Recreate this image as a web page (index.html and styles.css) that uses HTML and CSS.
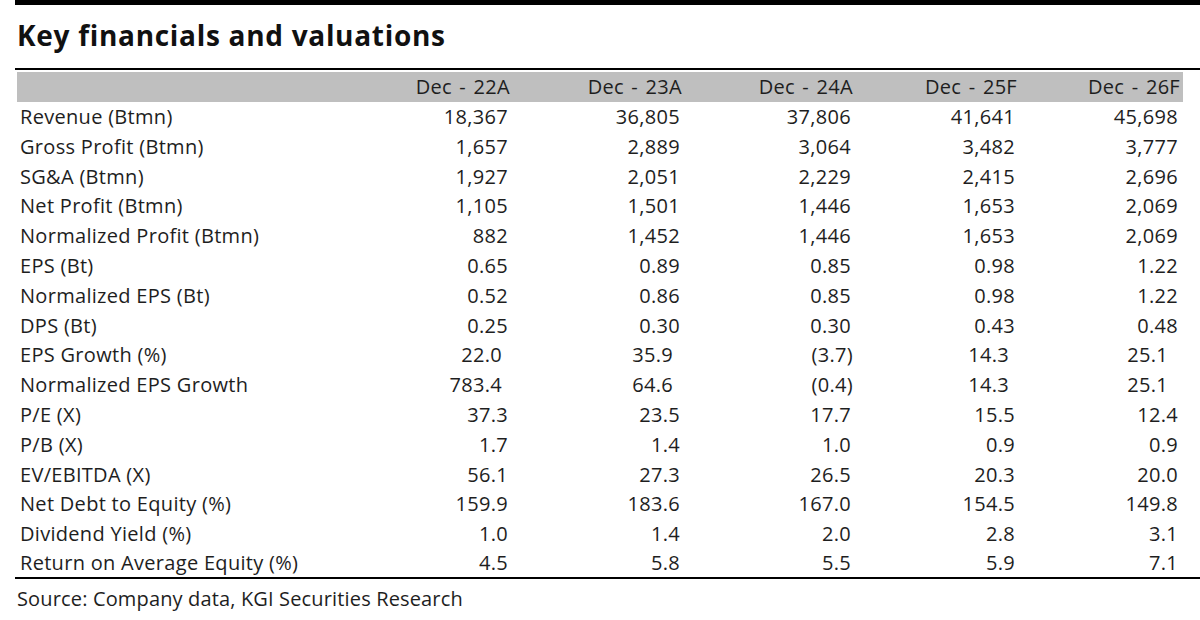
FILE: index.html
```html
<!DOCTYPE html>
<html>
<head>
<meta charset="utf-8">
<link rel="stylesheet" href="styles.css">
</head>
<body>
<div class="page">
  <div class="topbar"></div>
  <h1 class="title">Key financials and valuations</h1>
  <div class="tablewrap">
    <table class="fin">
      <colgroup>
        <col class="c-label"><col class="c1"><col class="c2"><col class="c3"><col class="c4"><col class="c5">
      </colgroup>
      <thead>
        <tr class="head"><th></th><th>Dec - 22A</th><th>Dec - 23A</th><th>Dec - 24A</th><th>Dec - 25F</th><th>Dec - 26F</th></tr>
      </thead>
      <tbody>
        <tr><td>Revenue (Btmn)</td><td>18,367</td><td>36,805</td><td>37,806</td><td>41,641</td><td>45,698</td></tr>
        <tr><td>Gross Profit (Btmn)</td><td>1,657</td><td>2,889</td><td>3,064</td><td>3,482</td><td>3,777</td></tr>
        <tr><td>SG&amp;A (Btmn)</td><td>1,927</td><td>2,051</td><td>2,229</td><td>2,415</td><td>2,696</td></tr>
        <tr><td>Net Profit (Btmn)</td><td>1,105</td><td>1,501</td><td>1,446</td><td>1,653</td><td>2,069</td></tr>
        <tr><td>Normalized Profit (Btmn)</td><td>882</td><td>1,452</td><td>1,446</td><td>1,653</td><td>2,069</td></tr>
        <tr><td>EPS (Bt)</td><td>0.65</td><td>0.89</td><td>0.85</td><td>0.98</td><td>1.22</td></tr>
        <tr><td>Normalized EPS (Bt)</td><td>0.52</td><td>0.86</td><td>0.85</td><td>0.98</td><td>1.22</td></tr>
        <tr><td>DPS (Bt)</td><td>0.25</td><td>0.30</td><td>0.30</td><td>0.43</td><td>0.48</td></tr>
        <tr class="paren"><td>EPS Growth (%)</td><td>22.0</td><td>35.9</td><td class="neg">(3.7)</td><td>14.3</td><td>25.1</td></tr>
        <tr class="paren"><td>Normalized EPS Growth</td><td>783.4</td><td>64.6</td><td class="neg">(0.4)</td><td>14.3</td><td>25.1</td></tr>
        <tr class="dec"><td>P/E (X)</td><td>37.3</td><td>23.5</td><td>17.7</td><td>15.5</td><td>12.4</td></tr>
        <tr class="dec"><td>P/B (X)</td><td>1.7</td><td>1.4</td><td>1.0</td><td>0.9</td><td>0.9</td></tr>
        <tr class="dec"><td>EV/EBITDA (X)</td><td>56.1</td><td>27.3</td><td>26.5</td><td>20.3</td><td>20.0</td></tr>
        <tr class="dec"><td>Net Debt to Equity (%)</td><td>159.9</td><td>183.6</td><td>167.0</td><td>154.5</td><td>149.8</td></tr>
        <tr class="dec"><td>Dividend Yield (%)</td><td>1.0</td><td>1.4</td><td>2.0</td><td>2.8</td><td>3.1</td></tr>
        <tr class="dec"><td>Return on Average Equity (%)</td><td>4.5</td><td>5.8</td><td>5.5</td><td>5.9</td><td>7.1</td></tr>
      </tbody>
    </table>
  </div>
  <p class="source">Source: Company data, KGI Securities Research</p>
</div>
</body>
</html>
```

FILE: styles.css
```css
html, body {
  margin: 0;
  padding: 0;
  background: #ffffff;
}

.page {
  width: 1200px;
  height: 620px;
  overflow: hidden;
  padding-left: 15px;
  box-sizing: border-box;
  font-family: "Open Sans", "DejaVu Sans", sans-serif;
  color: #1e1e1e;
}

.topbar {
  height: 5px;
  background: #000;
}

.title {
  margin: 0;
  padding: 15px 0 0 2px;
  height: 48px;
  box-sizing: border-box;
  font-size: 28px;
  line-height: 30px;
  font-weight: 700;
  color: #111;
  letter-spacing: 0.7px;
}

.tablewrap {
  margin-top: 15px;
  border-top: 2.5px solid #000;
  border-bottom: 2.5px solid #000;
  padding-top: 2px;
  padding-left: 2px;
}

.fin {
  border-collapse: collapse;
  table-layout: fixed;
  width: 1166px;
  font-size: 20px;
  letter-spacing: 0.3px;
}

.c-label { width: 323px; }
.c1 { width: 173px; }
.c2 { width: 172px; }
.c3 { width: 171px; }
.c4 { width: 164px; }
.c5 { width: 163px; }

.fin th,
.fin td {
  padding: 0 5px 0 3px;
  height: 29.8px;
  line-height: 29.8px;
  white-space: nowrap;
  text-align: right;
  font-weight: 400;
}

.fin td:first-child {
  text-align: left;
}

.head th {
  background: #bfbfbf;
  height: 29px;
  line-height: 30px;
  padding-right: 3px;
  word-spacing: 2px;
}

.fin tbody tr:last-child td {
  height: 28px;
  line-height: 28px;
}

.paren td:nth-child(2) { padding-right: 11px; }
.paren td:nth-child(3) { padding-right: 12px; }
.paren td:nth-child(5) { padding-right: 11px; }
.paren td:nth-child(6) { padding-right: 15px; }
.paren td.neg { padding-right: 3px; }

.source {
  margin: 0;
  padding: 9px 0 0 2px;
  font-size: 20px;
  line-height: 22px;
  letter-spacing: 0.15px;
}
```
